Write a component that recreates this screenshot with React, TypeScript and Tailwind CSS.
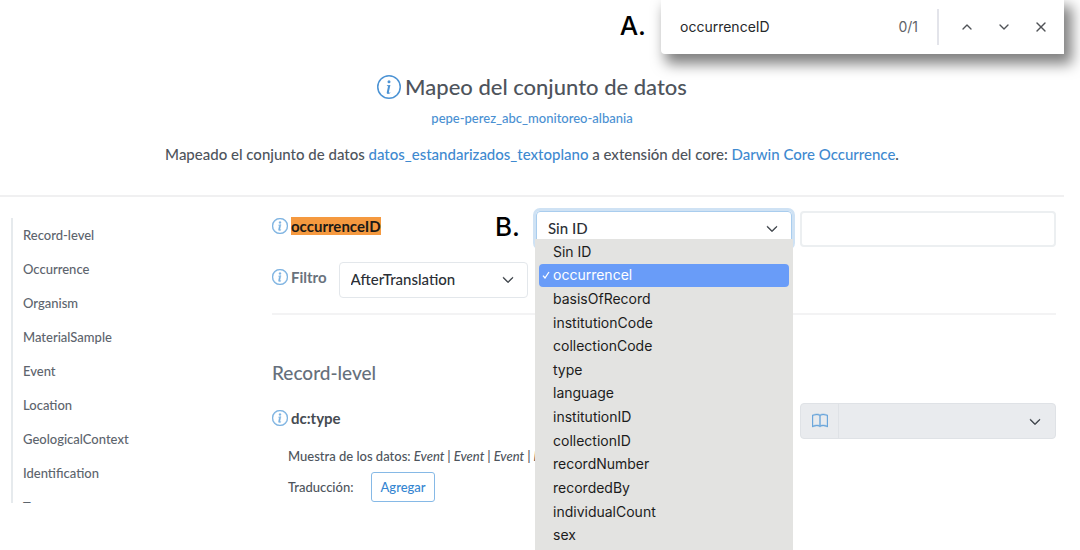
import { useState } from "react";
import type { ReactNode, SelectHTMLAttributes } from "react";
import { BsBook, BsChevronDown, BsInfoCircle } from "react-icons/bs";
import { ChevronDown, ChevronUp, X } from "lucide-react";

const sections = [
  "Record-level",
  "Occurrence",
  "Organism",
  "MaterialSample",
  "Event",
  "Location",
  "GeologicalContext",
  "Identification",
  "Taxon",
];

const columns = [
  "Sin ID",
  "occurrencel",
  "basisOfRecord",
  "institutionCode",
  "collectionCode",
  "type",
  "language",
  "institutionID",
  "collectionID",
  "recordNumber",
  "recordedBy",
  "individualCount",
  "sex",
];

function FieldLabel({ help, children }: { help: string; children: ReactNode }) {
  return (
    <div className="flex h-[30px] shrink-0 items-center gap-[3px] text-[15px] leading-[18px] font-bold">
      <button type="button" aria-label={help} className="shrink-0 text-[#78b0e0]">
        <BsInfoCircle className="size-4 stroke-[0.4]" />
      </button>
      {children}
    </div>
  );
}

function Select({ className, ...props }: SelectHTMLAttributes<HTMLSelectElement>) {
  return (
    <div className="relative min-w-0 flex-1">
      <select
        {...props}
        className={`block h-9 w-full appearance-none px-[11px] text-[15px] font-medium text-[#2b2f36] outline-none ${className ?? ""}`}
      />
      <BsChevronDown className="pointer-events-none absolute top-3 right-3.5 size-3 stroke-1 text-[#343a40]" />
    </div>
  );
}

function FindBar() {
  return (
    <div
      role="search"
      className="absolute top-0 right-4 z-20 flex h-[54px] w-[403px] items-center rounded-bl bg-white pr-[7px] pl-[19px] font-['Inter',sans-serif] text-sm shadow-[6px_8px_14px_2px_rgba(0,0,0,0.5)]"
    >
      <input
        aria-label="Buscar en la página"
        defaultValue="occurrenceID"
        className="min-w-0 flex-1 text-[#26282b] outline-none"
      />
      <span className="mr-[19px] text-[#5f6368]">0/1</span>
      <span className="mr-3 h-9 w-0.5 bg-[#e3e4ea]" />
      <div className="flex gap-[5px] text-[#505357]">
        <button type="button" aria-label="Anterior" className="grid size-8 place-items-center">
          <ChevronUp className="size-4" />
        </button>
        <button type="button" aria-label="Siguiente" className="grid size-8 place-items-center">
          <ChevronDown className="size-4" />
        </button>
        <button type="button" aria-label="Cerrar" className="grid size-8 place-items-center">
          <X className="size-4" />
        </button>
      </div>
    </div>
  );
}

function Marker({ children }: { children: ReactNode }) {
  return <span className="font-['Inter',sans-serif] text-[26px] leading-8 font-medium text-black">{children}</span>;
}

function ColumnMenu({ selected, onSelect }: { selected: string; onSelect: (c: string) => void }) {
  return (
    <ul
      role="listbox"
      aria-label="Columnas"
      className="absolute -inset-x-px top-7 z-10 grid h-[311px] auto-rows-fr bg-[#e3e3e1] px-1 pt-px pb-[3px] font-['Inter',sans-serif] text-sm text-[#1c1c1c]"
    >
      {columns.map((c) => (
        <li
          key={c}
          role="option"
          aria-selected={c === selected}
          onClick={() => onSelect(c)}
          className={
            c === selected
              ? "flex min-h-0 items-center rounded bg-[#699cf8] text-white"
              : "flex min-h-0 items-center"
          }
        >
          <span className="flex w-3.5 shrink-0 justify-center">
            {c === selected && (
              <svg viewBox="0 0 8 8" className="size-2" fill="none" stroke="currentColor" strokeWidth="1.3">
                <path d="M1 4.6 3 7 7 1" />
              </svg>
            )}
          </span>
          <span className="leading-5">{c}</span>
        </li>
      ))}
    </ul>
  );
}

export default function App() {
  const [selected, setSelected] = useState("occurrencel");

  return (
    <div className="relative min-h-screen bg-white font-['Lato',sans-serif] text-sm text-[#4e545c]">
      <div className="absolute top-2.5 right-[434px]">
        <Marker>A.</Marker>
      </div>
      <FindBar />

      <main className="mr-4">
        <header className="flex h-[197px] flex-col items-center border-b-2 border-[#f0f0f1] pt-[71px] text-center">
          <h1 className="flex items-center gap-1 text-[22px] leading-8 font-medium text-[#4e545c]">
            <button type="button" aria-label="Ayuda del mapeo" className="text-[#4c93d4]">
              <BsInfoCircle className="size-6" />
            </button>
            Mapeo del conjunto de datos
          </h1>
          <a href="#recurso" className="mt-[5px] text-[13px] leading-5 font-medium text-[#4a90d2]">
            pepe-perez_abc_monitoreo-albania
          </a>
          <p className="mt-3.5 text-[15px] leading-6 font-medium">
            Mapeado el conjunto de datos{" "}
            <a href="#fuente" className="text-[#3f8ad0]">
              datos_estandarizados_textoplano
            </a>{" "}
            a extensión del core:{" "}
            <a href="#extension" className="text-[#3f8ad0]">
              Darwin Core Occurrence
            </a>
            .
          </p>
        </header>

        <div className="flex pr-2 pl-[11px]">
          <nav
            aria-label="Secciones"
            className="mt-[21px] h-[285px] w-[261px] shrink-0 overflow-hidden border-l-2 border-[#e6eaed] pl-2.5"
          >
            <ul>
              {sections.map((s) => (
                <li key={s} className="flex h-[34px] items-center">
                  <a href={`#${s}`} className="text-[13px] font-medium text-[#5d646d]">
                    {s}
                  </a>
                </li>
              ))}
            </ul>
          </nav>

          <div className="min-w-0 flex-1 pt-3.5">
            <section className="grid grid-cols-3 gap-2 border-b-2 border-[#f3f3f4] pb-[15px]">
              <div className="flex flex-col gap-[15px]">
                <div className="flex h-9 items-start justify-between pr-2">
                  <FieldLabel help="Ayuda de occurrenceID">
                    <label htmlFor="occurrence-id" className="bg-[#f5993f] text-[#1d1a16]">
                      occurrenceID
                    </label>
                  </FieldLabel>
                  <Marker>B.</Marker>
                </div>
                <div className="flex items-start gap-3">
                  <FieldLabel help="Ayuda del filtro">
                    <label htmlFor="filter" className="text-[#69727d]">
                      Filtro
                    </label>
                  </FieldLabel>
                  <Select id="filter" defaultValue="AfterTranslation" className="rounded border border-[#e3e7eb]">
                    <option>AfterTranslation</option>
                    <option>BeforeTranslation</option>
                  </Select>
                </div>
              </div>

              <div className="relative flex items-start">
                <Select
                  id="occurrence-id"
                  defaultValue="Sin ID"
                  className="rounded border border-[#a9cdee] ring-3 ring-[#cfe2f4]"
                >
                  <option>Sin ID</option>
                </Select>
                <ColumnMenu selected={selected} onSelect={setSelected} />
              </div>

              <input
                aria-label="Valor constante de occurrenceID"
                className="h-9 w-full min-w-0 rounded border-2 border-[#eceff1] px-3 outline-none"
              />
            </section>

            <h2 className="mt-11 text-[19px] leading-7 font-medium text-[#66707c]">Record-level</h2>

            <section className="mt-4 grid grid-cols-3 gap-x-2">
              <FieldLabel help="Ayuda de dc:type">
                <label htmlFor="dc-type" className="text-[#454b52]">
                  dc:type
                </label>
              </FieldLabel>
              <div className="col-start-3 flex h-9 rounded border border-[#dfe2e6] bg-[#e9ebee]">
                <button
                  type="button"
                  aria-label="Vocabulario"
                  className="grid w-[38px] place-items-center border-r border-[#dfe2e6] text-[#6ba6dc]"
                >
                  <BsBook className="size-4 stroke-[0.4]" />
                </button>
                <Select id="dc-type" defaultValue="">
                  <option value="" />
                </Select>
              </div>
            </section>

            <div className="w-[264px] pl-4 text-[13px] leading-5 font-medium">
              <p className="mt-[7px] overflow-hidden whitespace-nowrap">
                Muestra de los datos: <em>Event | Event | Event | E</em>
              </p>
              <div className="mt-1.5 flex items-center gap-[18px]">
                <span>Traducción:</span>
                <button
                  type="button"
                  className="h-[30px] rounded-[3px] border border-[#86b9e6] px-2 text-[#3485d1]"
                >
                  Agregar
                </button>
              </div>
            </div>
          </div>
        </div>
      </main>
    </div>
  );
}
